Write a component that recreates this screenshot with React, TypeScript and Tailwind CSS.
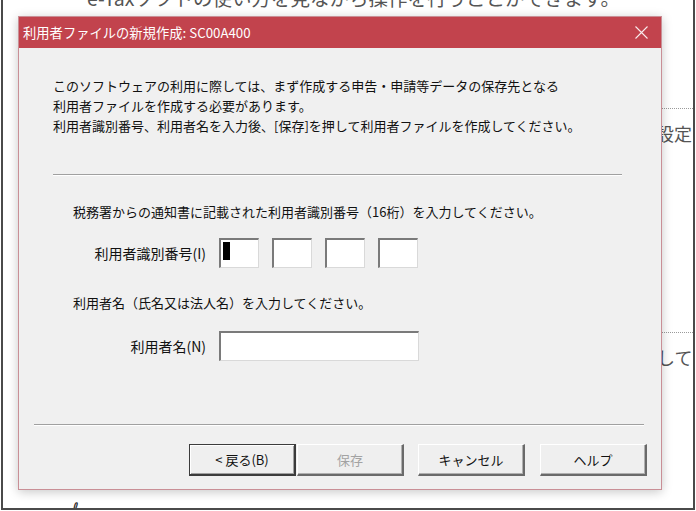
import React from 'react';

const jp = { fontFamily: '"Noto Sans CJK JP", "Noto Sans", sans-serif' };

function Sunken({ className = '', children }: { className?: string; children?: React.ReactNode }) {
  return (
    <div
      className={`h-[30px] bg-white border-t-2 border-l-2 border-t-[#7a7a7a] border-l-[#7a7a7a] border-b border-r border-b-[#d9d9d9] border-r-[#d9d9d9] ${className}`}
    >
      {children}
    </div>
  );
}

function Btn({ label, def = false, disabled = false, className = '' }: { label: string; def?: boolean; disabled?: boolean; className?: string }) {
  const edge = def
    ? 'border border-[#3c3c3c] border-b-2 border-r-2 shadow-[inset_1px_1px_0_#ffffff,inset_-1px_-1px_0_#a0a0a0]'
    : 'border border-t-white border-l-white border-b-[#6a6a6a] border-r-[#6a6a6a] border-b-2 border-r-2 shadow-[inset_-1px_-1px_0_#b0b0b0]';
  return (
    <div
      className={`w-[107px] h-[32px] flex items-center justify-center bg-[#efefef] text-[13px] ${edge} ${disabled ? 'text-[#a3a3a3]' : 'text-[#111]'} ${className}`}
    >
      {label}
    </div>
  );
}

export default function App() {
  return (
    <div className="w-[696px] h-[511px] bg-white px-[1px] pb-[1px]" style={jp}>
      <div className="relative h-full overflow-hidden border-x-2 border-b-2 border-[#4a4a4a] bg-white">
        {/* page behind the dialog */}
        <div className="text-[#555] text-[18px] leading-[24px] whitespace-nowrap">
          <div className="mt-[-14px] pl-[84px] text-[19.5px]">e-Taxソフトの使い方を見ながら操作を行うことができます。</div>
          <div className="mt-[98px] ml-[40px] border-t border-dotted border-[#9a9a9a]" />
          <div className="mt-[12px] pl-[653px]">設定</div>
          <div className="mt-[187px] ml-[40px] border-t border-dotted border-[#9a9a9a]" />
          <div className="mt-[12px] pl-[654px]">してい</div>
          <div className="mt-[128px] pl-[69px] text-[16px] text-[#222]" style={{ fontFamily: '"DejaVu Sans", sans-serif' }}>ℓ</div>
        </div>

        {/* dialog window */}
        <div className="absolute left-[15px] top-[16px] w-[644px] h-[474px] flex flex-col border border-[#c98f96] bg-[#f0f0f0] shadow-[0_2px_10px_rgba(0,0,0,0.22)] text-[13px] leading-[20px] text-[#111]">
          <div className="h-[31px] shrink-0 flex items-center justify-between bg-[#c2434d] pl-[4px] pr-[13px] text-white">
            <span className="text-[13.3px]">利用者ファイルの新規作成: SC00A400</span>
            <svg width="13" height="13" viewBox="0 0 13 13" className="opacity-90">
              <path d="M0.5 0.5 L12.5 12.5 M12.5 0.5 L0.5 12.5" stroke="#ffffff" strokeWidth="1.1" fill="none" />
            </svg>
          </div>

          <div className="flex flex-col">
            <div className="pt-[28px] pl-[34px]">
              <p>このソフトウェアの利用に際しては、まず作成する申告・申請等データの保存先となる</p>
              <p>利用者ファイルを作成する必要があります。</p>
              <p>利用者識別番号、利用者名を入力後、[保存]を押して利用者ファイルを作成してください。</p>
            </div>

            <div className="mt-[38px] ml-[34px] mr-[39px] border-t border-t-[#a0a0a0] border-b border-b-white" />

            <p className="mt-[26px] pl-[54px]">税務署からの通知書に記載された利用者識別番号（16桁）を入力してください。</p>

            <div className="mt-[16px] flex items-center">
              <div className="w-[187px] text-right text-[14px]">利用者識別番号(I)</div>
              <div className="ml-[13px] flex gap-[13px]">
                <Sunken className="w-[40px] pl-[2px] pt-[2px]">
                  <div className="w-[7px] h-[18px] bg-black" />
                </Sunken>
                <Sunken className="w-[40px]" />
                <Sunken className="w-[40px]" />
                <Sunken className="w-[40px]" />
              </div>
            </div>

            <p className="mt-[25px] pl-[54px]">利用者名（氏名又は法人名）を入力してください。</p>

            <div className="mt-[18px] flex items-center">
              <div className="w-[187px] text-right text-[14px]">利用者名(N)</div>
              <Sunken className="ml-[13px] w-[200px]" />
            </div>

            <div className="mt-[63px] ml-[15px] mr-[17px] border-t border-t-[#a0a0a0] border-b border-b-white" />

            <div className="mt-[18px] flex justify-end pr-[14px]">
              <Btn label="< 戻る(B)" def />
              <Btn label="保存" disabled className="ml-[1px]" />
              <Btn label="キャンセル" className="ml-[14px]" />
              <Btn label="ヘルプ" className="ml-[15px]" />
            </div>
          </div>
        </div>
      </div>
    </div>
  );
}
